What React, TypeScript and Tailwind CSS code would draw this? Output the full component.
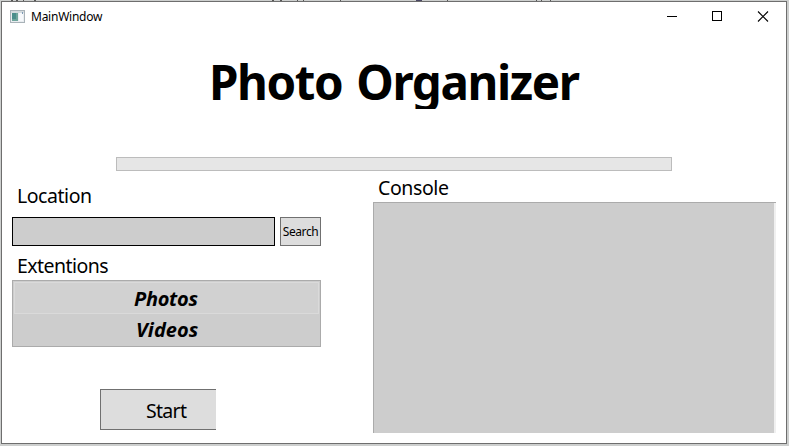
import React from "react";

function AppIcon() {
  return (
    <svg width="16" height="14" viewBox="0 0 16 14" className="shrink-0">
      <rect x="0.5" y="0.5" width="14" height="12" fill="#e9edf0" stroke="#a9b2b8" />
      <rect x="1" y="1" width="13" height="2" fill="#d3dade" />
      <rect x="2" y="3" width="6" height="8" fill="#6fa59c" />
      <rect x="2" y="3" width="4" height="6" fill="#4b8e8c" />
      <rect x="9" y="3" width="4" height="8" fill="#f6f8fb" />
      <rect x="12" y="2" width="1" height="2" fill="#7d9ab5" />
    </svg>
  );
}

/* Sliver of the window behind, showing above the top border. */
function BackgroundSliver() {
  return (
    <svg width="788" height="1" viewBox="0 0 788 1" className="block">
      <path
        d="M10 .5h2M15 .5h2M22 .5h1M33 .5h2M271 .5h2M279 .5h2M296 .5h1M302 .5h1M339 .5h1M446 .5h1M535 .5h1M540 .5h1M549 .5h1"
        stroke="#555"
      />
      <path d="M415 .5h6" stroke="#4a4763" />
    </svg>
  );
}

function TitleBar() {
  return (
    <div className="flex h-[29px] items-center pl-2">
      <AppIcon />
      <span className="ml-[5px] text-[12px] leading-[29px] tracking-[-0.25px]">MainWindow</span>
      <svg width="106" height="12" viewBox="0 0 106 12" className="mr-[15px] ml-auto" fill="none" stroke="#000">
        <path d="M2 5.5h10" />
        <rect x="47.5" y="0.5" width="9" height="9" />
        <path d="M93 0.5l10 10M103 0.5l-10 10" strokeWidth="1.1" />
      </svg>
    </div>
  );
}

export default function App() {
  return (
    <div className="h-[446px] w-[789px] overflow-hidden bg-[#cdcfce] pl-px font-['Noto_Sans','Open_Sans',sans-serif] text-black">
      <BackgroundSliver />
      <div className="flex h-[443px] w-[786px] flex-col border border-[#6e6e6e] bg-white">
        <TitleBar />
        <h1 className="mt-[21px] h-[57px] overflow-hidden pl-[207px] text-[47.5px] leading-[59px] font-bold whitespace-nowrap">
          <span className="inline-block tracking-[-1.4px] [word-spacing:3px]">Photo Organizer</span>
        </h1>
        <div className="mt-12 ml-[114px] h-[14px] w-[556px] shrink-0 border border-[#bcbcbc] bg-[#e6e6e6]" />
        <div className="flex">
          <div className="ml-[10px] w-[309px] pt-[10px]">
            <div className="h-[29px] pl-[5px] text-[19.5px] leading-[30px]">
              <span className="tracking-[-0.45px]">Location</span>
            </div>
            <div className="mt-[7px] flex gap-[5px]">
              <div className="h-[29px] w-[263px] border border-black bg-[#cdcdcd]" />
              <div className="flex h-[29px] w-[41px] items-center justify-center border border-[#707070] bg-[#dddddd] text-[12px] tracking-[-0.4px]">
                Search
              </div>
            </div>
            <div className="mt-[5px] h-[29px] pl-[5px] text-[19.5px] leading-[30px]">
              <span className="tracking-[-0.55px]">Extentions</span>
            </div>
            <div className="h-[67px] border border-[#ababab] bg-[#cdcdcd] p-px text-[20px] font-bold italic">
              <div className="h-[32px] border border-[#dadada] bg-[#d1d1d1] pl-[119px] leading-[32px]">
                <span className="tracking-[-0.3px]">Photos</span>
              </div>
              <div className="h-[31px] pl-[122px] leading-[32px]">
                <span className="tracking-[0.05px]">Videos</span>
              </div>
            </div>
            <div className="mt-[42px] ml-[88px] h-[41px] w-[116px] border border-r-0 border-[#707070] bg-[#dddddd] pl-[45px] text-[19.5px] leading-[41px]">
              <span className="tracking-[-0.7px]">Start</span>
            </div>
          </div>
          <div className="ml-[52px] w-[403px] pt-[2px]">
            <div className="h-[29px] pl-[5px] text-[19.5px] leading-[30px]">
              <span className="tracking-[-0.4px]">Console</span>
            </div>
            <div className="flex h-[231px] border-t border-l border-[#ababab] bg-[#cdcdcd]">
              <div className="ml-auto w-[2px] bg-[#f0f0f0]" />
            </div>
          </div>
        </div>
      </div>
    </div>
  );
}
